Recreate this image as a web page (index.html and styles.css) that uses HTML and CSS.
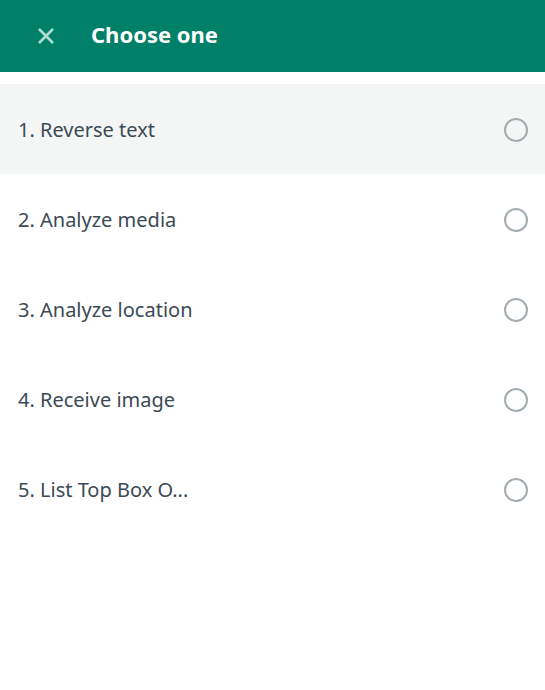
FILE: index.html
```html
<!DOCTYPE html>
<html>
<head>
<meta charset="utf-8">
<link rel="stylesheet" href="styles.css">
</head>
<body>
<header class="header">
  <button class="close" aria-label="Close">
    <svg width="18" height="18" viewBox="0 0 18 18"><path d="M2 2 L16 16 M16 2 L2 16" stroke="currentColor" stroke-width="2.6" fill="none"/></svg>
  </button>
  <h1 class="title">Choose one</h1>
</header>
<ul class="list">
  <li class="item active"><span class="label">1. Reverse text</span><span class="radio"></span></li>
  <li class="item"><span class="label">2. Analyze media</span><span class="radio"></span></li>
  <li class="item"><span class="label">3. Analyze location</span><span class="radio"></span></li>
  <li class="item"><span class="label">4. Receive image</span><span class="radio"></span></li>
  <li class="item"><span class="label">5. List Top Box O...</span><span class="radio"></span></li>
</ul>
</body>
</html>
```
FILE: styles.css
```css
* { box-sizing: border-box; }
html, body { margin: 0; padding: 0; background: #fff; }
body { font-family: "Noto Sans", "Open Sans", sans-serif; width: 545px; height: 690px; overflow: hidden; }
.header {
  height: 72px;
  background: #008069;
  display: flex;
  align-items: center;
  padding-left: 37px;
  padding-bottom: 5px;
}
.close {
  border: 0; background: none; padding: 0;
  width: 18px; height: 18px;
  display: flex; align-items: center; justify-content: center;
  color: #b0dcd2;
  margin-right: 36px;
  margin-top: 5px;
}
.title {
  margin: 0;
  color: #fff;
  font-size: 22px;
  font-weight: 700;
}
.list { list-style: none; margin: 12px 0 0; padding: 0; }
.item {
  height: 90px;
  display: flex;
  align-items: center;
  justify-content: space-between;
  padding: 1px 17px 0 18px;
}
.item.active { background: #f4f5f5; }
.label { font-size: 20px; color: #3b4a54; }
.radio {
  width: 24px; height: 24px;
  border: 2px solid #a3acb1;
  border-radius: 50%;
}
```
